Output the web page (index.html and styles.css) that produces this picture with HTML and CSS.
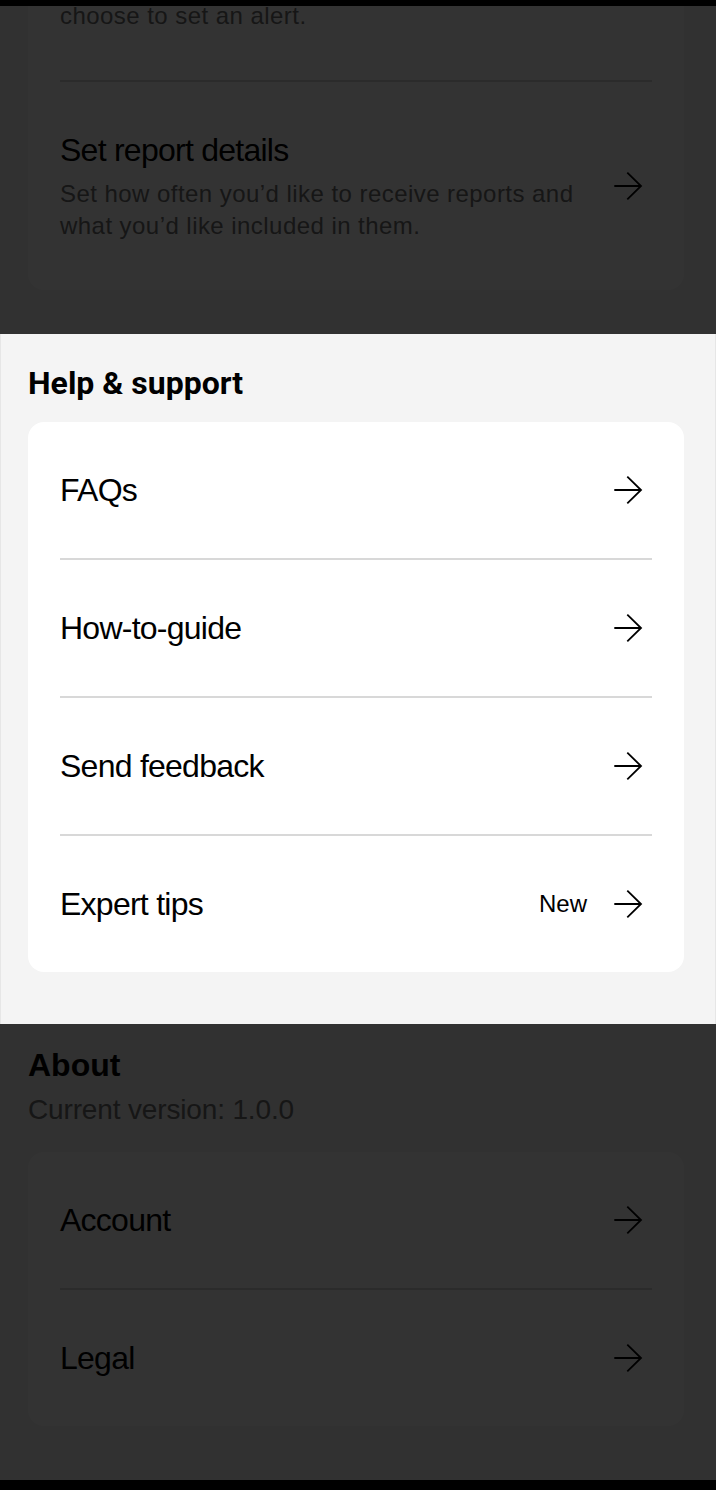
FILE: index.html
```html
<!DOCTYPE html>
<html lang="en">
<head>
<meta charset="utf-8">
<title>Settings</title>
<link rel="stylesheet" href="styles.css">
</head>
<body>
<div class="statusbar"></div>
<main class="page">
  <section class="group group-top">
    <div class="card card-cut">
      <div class="row row-cut">
        <p class="desc">choose to set an alert.</p>
      </div>
      <a class="row" href="#">
        <div class="row-text">
          <span class="title">Set report details</span>
          <span class="desc">Set how often you’d like to receive reports and what you’d like included in them.</span>
        </div>
        <span class="row-end">
          <svg class="arrow" viewBox="0 4 48 40" width="48" height="40"><path d="M10.3 24H37M23.3 10.7L37 24L23.3 37.3"/></svg>
        </span>
      </a>
    </div>
  </section>

  <section class="group group-help spotlight">
    <h2 class="heading heading-help">Help &amp; support</h2>
    <div class="card">
      <a class="row" href="#">
        <span class="title">FAQs</span>
        <span class="row-end">
          <svg class="arrow" viewBox="0 4 48 40" width="48" height="40"><path d="M10.3 24H37M23.3 10.7L37 24L23.3 37.3"/></svg>
        </span>
      </a>
      <a class="row" href="#">
        <span class="title">How-to-guide</span>
        <span class="row-end">
          <svg class="arrow" viewBox="0 4 48 40" width="48" height="40"><path d="M10.3 24H37M23.3 10.7L37 24L23.3 37.3"/></svg>
        </span>
      </a>
      <a class="row" href="#">
        <span class="title">Send feedback</span>
        <span class="row-end">
          <svg class="arrow" viewBox="0 4 48 40" width="48" height="40"><path d="M10.3 24H37M23.3 10.7L37 24L23.3 37.3"/></svg>
        </span>
      </a>
      <a class="row" href="#">
        <span class="title">Expert tips</span>
        <span class="row-end">
          <span class="badge">New</span>
          <svg class="arrow" viewBox="0 4 48 40" width="48" height="40"><path d="M10.3 24H37M23.3 10.7L37 24L23.3 37.3"/></svg>
        </span>
      </a>
    </div>
  </section>

  <section class="group group-about">
    <h2 class="heading heading-about">About</h2>
    <p class="version">Current version: 1.0.0</p>
    <div class="card">
      <a class="row" href="#">
        <span class="title">Account</span>
        <span class="row-end">
          <svg class="arrow" viewBox="0 4 48 40" width="48" height="40"><path d="M10.3 24H37M23.3 10.7L37 24L23.3 37.3"/></svg>
        </span>
      </a>
      <a class="row" href="#">
        <span class="title">Legal</span>
        <span class="row-end">
          <svg class="arrow" viewBox="0 4 48 40" width="48" height="40"><path d="M10.3 24H37M23.3 10.7L37 24L23.3 37.3"/></svg>
        </span>
      </a>
    </div>
  </section>
</main>
<div class="overlay"></div>
<div class="navbar"></div>
</body>
</html>
```

FILE: styles.css
```css
* {
  box-sizing: border-box;
}

html,
body {
  margin: 0;
  padding: 0;
}

body {
  width: 716px;
  height: 1490px;
  overflow: hidden;
  background: #f4f4f4;
  font-family: "Liberation Sans", Arial, sans-serif;
  color: #000;
}

.statusbar {
  position: fixed;
  top: 0;
  left: 0;
  right: 0;
  height: 6px;
  background: #000;
  z-index: 5;
}

.navbar {
  position: fixed;
  left: 0;
  right: 0;
  bottom: 0;
  height: 10px;
  background: #000;
  z-index: 5;
}

.overlay {
  position: fixed;
  inset: 0;
  background: rgba(0, 0, 0, 0.8);
  z-index: 1;
}

.page {
  display: flex;
  flex-direction: column;
}

.group {
  padding: 0 32px 0 28px;
}

.group-top {
  padding-bottom: 44px;
}

.group-help {
  padding-top: 29px;
  padding-bottom: 52px;
}

.spotlight {
  position: relative;
  z-index: 2;
  background: #f4f4f4;
  border-left: 1px solid #e6e6e6;
  border-right: 1px solid #e6e6e6;
  padding-left: 27px;
  padding-right: 31px;
}

.group-about {
  padding-top: 21px;
}

.heading {
  margin: 0;
  font-size: 32px;
  line-height: 40px;
  font-weight: 700;
}

.heading-help {
  font-family: Roboto, "Liberation Sans", sans-serif;
  margin-bottom: 19px;
}

.heading-about {
  font-family: "Liberation Sans", Arial, sans-serif;
}

.version {
  margin: 7px 0 24px;
  font-size: 28px;
  line-height: 36px;
  letter-spacing: -0.15px;
  color: #6f6f6f;
}

.card {
  background: #fff;
  border-radius: 16px;
  padding: 0 32px;
  display: flex;
  flex-direction: column;
}

.card-cut {
  border-top-left-radius: 0;
  border-top-right-radius: 0;
}

.row {
  display: flex;
  align-items: center;
  justify-content: space-between;
  gap: 16px;
  padding: 48px 0;
  color: inherit;
  text-decoration: none;
  border-bottom: 2px solid #d8d8d8;
}

.row:last-child {
  border-bottom: none;
}

.row-cut {
  padding-top: 0;
}

.row-text {
  display: flex;
  flex-direction: column;
  gap: 8px;
  flex: 1;
  min-width: 0;
}

.title {
  font-size: 32px;
  line-height: 40px;
  letter-spacing: -0.75px;
  color: #000;
}

.desc {
  margin: 0;
  font-size: 24px;
  line-height: 32px;
  letter-spacing: 0.45px;
  color: #6f6f6f;
}

.row-end {
  display: flex;
  align-items: center;
  gap: 17px;
  flex-shrink: 0;
  height: 40px;
}

.badge {
  font-size: 24px;
  line-height: 32px;
  color: #000;
}

.arrow {
  display: block;
  width: 48px;
  height: 40px;
  fill: none;
  stroke: #000;
  stroke-width: 1.8;
  stroke-linecap: butt;
  stroke-linejoin: miter;
}
```
